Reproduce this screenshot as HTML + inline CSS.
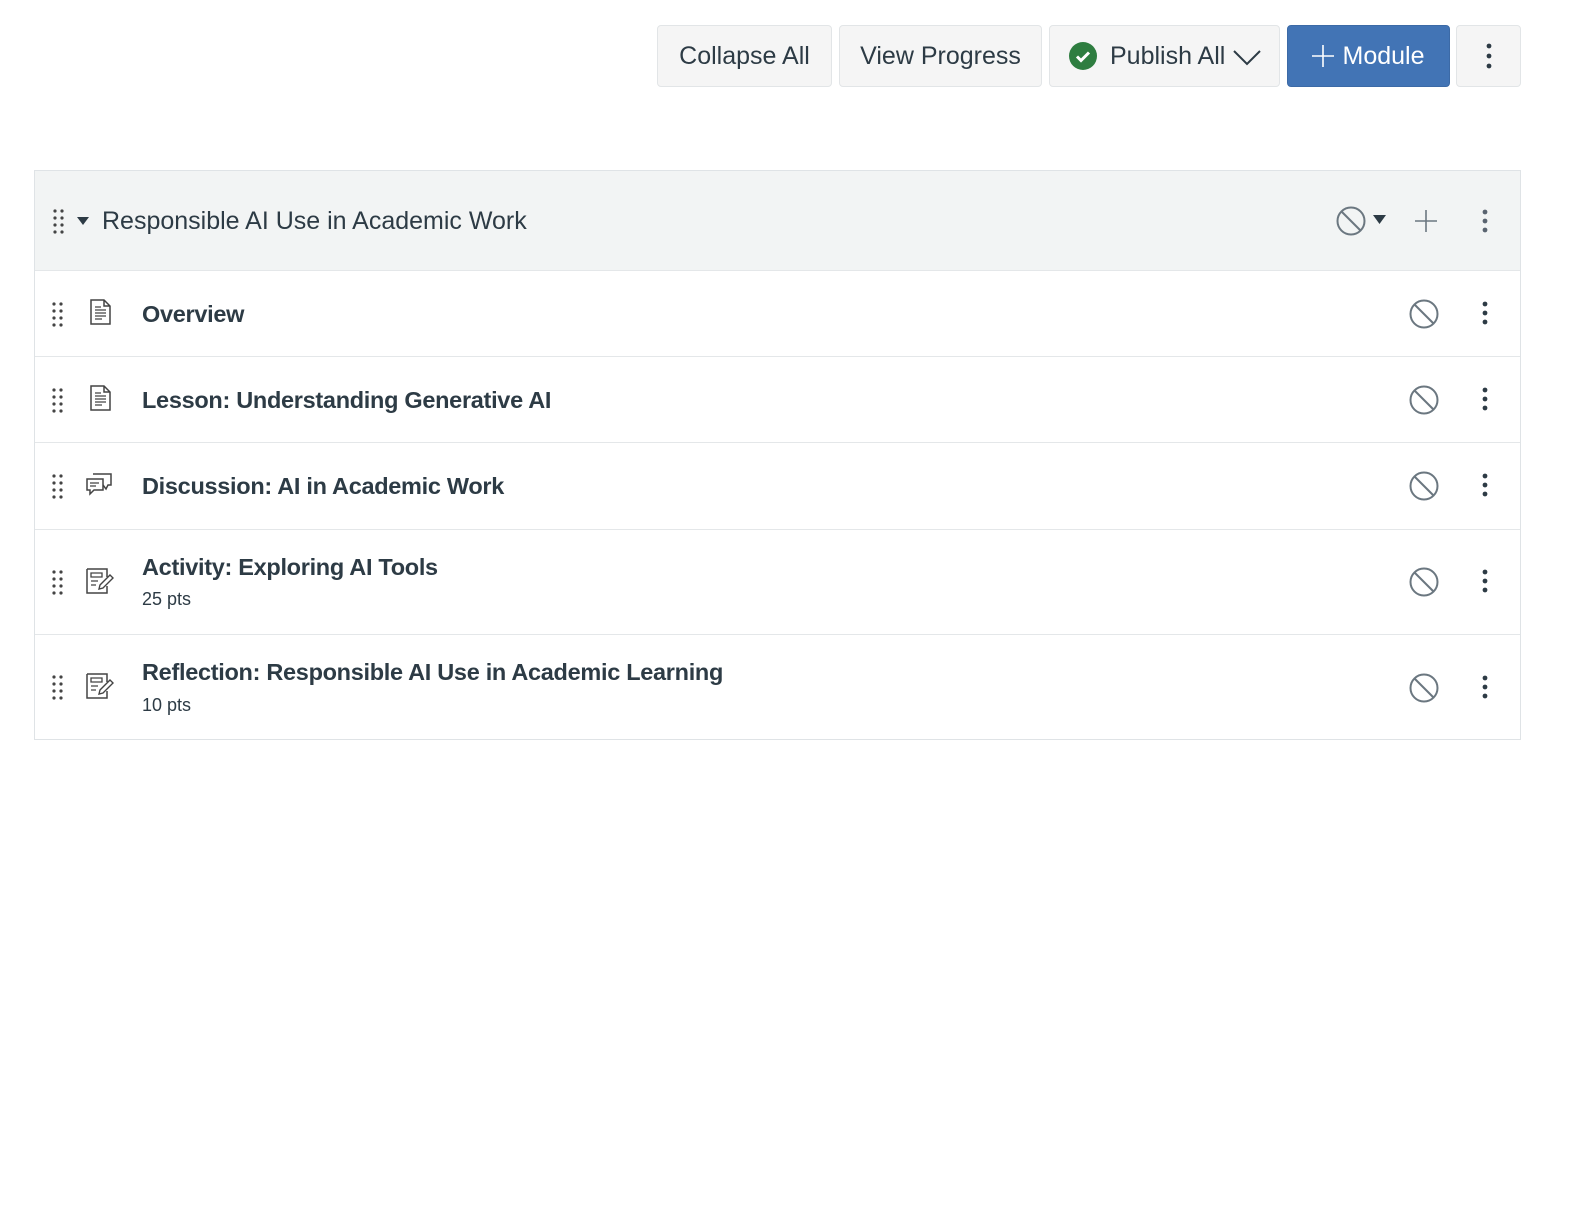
<!DOCTYPE html>
<html><head><meta charset="utf-8"><style>
body{margin:0;width:1586px;height:1213px;background:#fff;font-family:"Liberation Sans",sans-serif;color:#2d3b45;position:relative;overflow:hidden}
.btn{position:absolute;top:25px;height:62px;background:#f5f5f5;border:1px solid #e2e5e7;border-radius:4px;box-sizing:border-box;font-size:25px;line-height:60px;text-align:center;color:#2d3b45}
.mod{position:absolute;left:34px;top:170px;width:1487px;height:570px;border:1px solid #dfe3e6;box-sizing:border-box}
.hdr{position:absolute;left:0;top:0;right:0;height:99px;background:#f2f4f4;border-bottom:1px solid #e4e7e9}
.row{position:absolute;left:0;right:0;border-bottom:1px solid #e4e7e9}
.abs{position:absolute}
.t{position:absolute;left:107px;font-size:23.5px;font-weight:bold;color:#2d3b45;letter-spacing:-0.3px}
.pts{position:absolute;left:107px;font-size:18px;color:#2d3b45}
</style></head><body>
<div class="btn" style="left:657px;width:175px">Collapse All</div>
<div class="btn" style="left:839px;width:203px">View Progress</div>
<div class="btn" style="left:1049px;width:231px;text-align:left;padding-left:60px">Publish All
<svg class="abs" style="left:18px;top:15px" width="30" height="30"><circle cx="15" cy="15" r="14" fill="#2e7d40"/><path d="M9 15.5l4 4 8-8" stroke="#fff" stroke-width="3" fill="none"/></svg>
<svg class="abs" style="left:182px;top:22px" width="30" height="18"><path d="M2 3l13 13 13-13" stroke="#2d3b45" stroke-width="2" fill="none"/></svg></div>
<div class="btn" style="left:1287px;width:163px;background:#4274b5;border-color:#3c6aa6;color:#fff;padding-left:30px">Module
<svg class="abs" style="left:24px;top:19px" width="22" height="22"><path d="M11 0v22M0 11h22" stroke="#fff" stroke-width="1.6"/></svg></div>
<div class="btn" style="left:1456px;width:65px"><svg class="abs" style="left:29px;top:17px" width="6" height="26"><circle cx="3" cy="3" r="2.4" fill="#2d3b45"/><circle cx="3" cy="13" r="2.4" fill="#2d3b45"/><circle cx="3" cy="23" r="2.4" fill="#2d3b45"/></svg></div>

<div class="mod">
<div class="hdr">
<svg class="abs" style="left:17px;top:37px" width="14" height="26"><g fill="#444"><circle cx="3" cy="3" r="1.6"/><circle cx="10" cy="3" r="1.6"/><circle cx="3" cy="10" r="1.6"/><circle cx="10" cy="10" r="1.6"/><circle cx="3" cy="17" r="1.6"/><circle cx="10" cy="17" r="1.6"/><circle cx="3" cy="24" r="1.6"/><circle cx="10" cy="24" r="1.6"/></g></svg>
<svg class="abs" style="left:42px;top:45px" width="12" height="10"><path d="M0 1h12L6 9z" fill="#2d3b45"/></svg>
<div class="abs" style="left:67px;top:36px;font-size:25px;color:#2d3b45">Responsible AI Use in Academic Work</div>
<svg class="abs" style="left:1300px;top:34px" width="32" height="32"><circle cx="16" cy="16" r="13.5" stroke="#6b7780" stroke-width="2" fill="none"/><path d="M6.5 6.5l19 19" stroke="#6b7780" stroke-width="2"/></svg>
<svg class="abs" style="left:1338px;top:44px" width="14" height="10"><path d="M0 0h13L6.5 9z" fill="#2d3b45"/></svg>
<svg class="abs" style="left:1380px;top:39px" width="22" height="22"><path d="M11 0v22M0 11h22" stroke="#6b7780" stroke-width="1.6"/></svg>
<svg class="abs" style="left:1447px;top:38px" width="6" height="24"><g fill="#5a6470"><circle cx="3" cy="3" r="2.4"/><circle cx="3" cy="12" r="2.4"/><circle cx="3" cy="21" r="2.4"/></g></svg>
</div>

<div class="row" style="top:99px;height:86px">
<svg class="abs" style="left:16px;top:31px" width="14" height="26"><g fill="#444"><circle cx="3" cy="3" r="1.6"/><circle cx="10" cy="3" r="1.6"/><circle cx="3" cy="10" r="1.6"/><circle cx="10" cy="10" r="1.6"/><circle cx="3" cy="17" r="1.6"/><circle cx="10" cy="17" r="1.6"/><circle cx="3" cy="24" r="1.6"/><circle cx="10" cy="24" r="1.6"/></g></svg>
<svg class="abs" style="left:54px;top:29px" width="24" height="26"><path d="M2 1h13l6 6v18H2z M15 1v6h6" stroke="#444" stroke-width="1.5" fill="none"/><path d="M6 11h11M6 14h11M6 17h11M6 20h7M6 8h6" stroke="#444" stroke-width="1.3"/></svg>
<div class="t" style="top:31px">Overview</div>
<svg class="abs" style="left:1373px;top:28px" width="32" height="32"><circle cx="16" cy="16" r="13.5" stroke="#6b7780" stroke-width="2" fill="none"/><path d="M6.5 6.5l19 19" stroke="#6b7780" stroke-width="2"/></svg>
<svg class="abs" style="left:1447px;top:31px" width="6" height="24"><g fill="#2d3b45"><circle cx="3" cy="3" r="2.4"/><circle cx="3" cy="12" r="2.4"/><circle cx="3" cy="21" r="2.4"/></g></svg>
</div>
<div class="row" style="top:185px;height:86px">
<svg class="abs" style="left:16px;top:31px" width="14" height="26"><g fill="#444"><circle cx="3" cy="3" r="1.6"/><circle cx="10" cy="3" r="1.6"/><circle cx="3" cy="10" r="1.6"/><circle cx="10" cy="10" r="1.6"/><circle cx="3" cy="17" r="1.6"/><circle cx="10" cy="17" r="1.6"/><circle cx="3" cy="24" r="1.6"/><circle cx="10" cy="24" r="1.6"/></g></svg>
<svg class="abs" style="left:54px;top:29px" width="24" height="26"><path d="M2 1h13l6 6v18H2z M15 1v6h6" stroke="#444" stroke-width="1.5" fill="none"/><path d="M6 11h11M6 14h11M6 17h11M6 20h7M6 8h6" stroke="#444" stroke-width="1.3"/></svg>
<div class="t" style="top:31px">Lesson: Understanding Generative AI</div>
<svg class="abs" style="left:1373px;top:28px" width="32" height="32"><circle cx="16" cy="16" r="13.5" stroke="#6b7780" stroke-width="2" fill="none"/><path d="M6.5 6.5l19 19" stroke="#6b7780" stroke-width="2"/></svg>
<svg class="abs" style="left:1447px;top:31px" width="6" height="24"><g fill="#2d3b45"><circle cx="3" cy="3" r="2.4"/><circle cx="3" cy="12" r="2.4"/><circle cx="3" cy="21" r="2.4"/></g></svg>
</div>
<div class="row" style="top:271px;height:87px">
<svg class="abs" style="left:16px;top:31px" width="14" height="26"><g fill="#444"><circle cx="3" cy="3" r="1.6"/><circle cx="10" cy="3" r="1.6"/><circle cx="3" cy="10" r="1.6"/><circle cx="10" cy="10" r="1.6"/><circle cx="3" cy="17" r="1.6"/><circle cx="10" cy="17" r="1.6"/><circle cx="3" cy="24" r="1.6"/><circle cx="10" cy="24" r="1.6"/></g></svg>
<svg class="abs" style="left:50px;top:30px" width="30" height="26"><path d="M2 7h16v11H9l-4 4v-4H2z" stroke="#444" stroke-width="1.5" fill="none"/><path d="M8 2h18v11h-3l-2 4-3-4" stroke="#444" stroke-width="1.5" fill="none"/><path d="M5 11h9M5 14h6" stroke="#444" stroke-width="1.3"/></svg>
<div class="t" style="top:31px">Discussion: AI in Academic Work</div>
<svg class="abs" style="left:1373px;top:28px" width="32" height="32"><circle cx="16" cy="16" r="13.5" stroke="#6b7780" stroke-width="2" fill="none"/><path d="M6.5 6.5l19 19" stroke="#6b7780" stroke-width="2"/></svg>
<svg class="abs" style="left:1447px;top:31px" width="6" height="24"><g fill="#2d3b45"><circle cx="3" cy="3" r="2.4"/><circle cx="3" cy="12" r="2.4"/><circle cx="3" cy="21" r="2.4"/></g></svg>
</div>
<div class="row" style="top:358px;height:105px">
<svg class="abs" style="left:16px;top:40px" width="14" height="26"><g fill="#444"><circle cx="3" cy="3" r="1.6"/><circle cx="10" cy="3" r="1.6"/><circle cx="3" cy="10" r="1.6"/><circle cx="10" cy="10" r="1.6"/><circle cx="3" cy="17" r="1.6"/><circle cx="10" cy="17" r="1.6"/><circle cx="3" cy="24" r="1.6"/><circle cx="10" cy="24" r="1.6"/></g></svg>
<svg class="abs" style="left:50px;top:38px" width="30" height="28"><path d="M2 2h20v8M22 19v7H2V2" stroke="#444" stroke-width="1.5" fill="none"/><path d="M6 6h11v4H6zM6 14h7M6 18h5" stroke="#444" stroke-width="1.3" fill="none"/><path d="M14 22l1-4 10-10 3 3-10 10z" stroke="#444" stroke-width="1.4" fill="none"/></svg>
<div class="t" style="top:25px">Activity: Exploring AI Tools</div>
<div class="pts" style="top:60px">25 pts</div>
<svg class="abs" style="left:1373px;top:37px" width="32" height="32"><circle cx="16" cy="16" r="13.5" stroke="#6b7780" stroke-width="2" fill="none"/><path d="M6.5 6.5l19 19" stroke="#6b7780" stroke-width="2"/></svg>
<svg class="abs" style="left:1447px;top:40px" width="6" height="24"><g fill="#2d3b45"><circle cx="3" cy="3" r="2.4"/><circle cx="3" cy="12" r="2.4"/><circle cx="3" cy="21" r="2.4"/></g></svg>
</div>
<div class="row" style="top:463px;height:105px;border-bottom:none">
<svg class="abs" style="left:16px;top:40px" width="14" height="26"><g fill="#444"><circle cx="3" cy="3" r="1.6"/><circle cx="10" cy="3" r="1.6"/><circle cx="3" cy="10" r="1.6"/><circle cx="10" cy="10" r="1.6"/><circle cx="3" cy="17" r="1.6"/><circle cx="10" cy="17" r="1.6"/><circle cx="3" cy="24" r="1.6"/><circle cx="10" cy="24" r="1.6"/></g></svg>
<svg class="abs" style="left:50px;top:38px" width="30" height="28"><path d="M2 2h20v8M22 19v7H2V2" stroke="#444" stroke-width="1.5" fill="none"/><path d="M6 6h11v4H6zM6 14h7M6 18h5" stroke="#444" stroke-width="1.3" fill="none"/><path d="M14 22l1-4 10-10 3 3-10 10z" stroke="#444" stroke-width="1.4" fill="none"/></svg>
<div class="t" style="top:25px">Reflection: Responsible AI Use in Academic Learning</div>
<div class="pts" style="top:61px">10 pts</div>
<svg class="abs" style="left:1373px;top:38px" width="32" height="32"><circle cx="16" cy="16" r="13.5" stroke="#6b7780" stroke-width="2" fill="none"/><path d="M6.5 6.5l19 19" stroke="#6b7780" stroke-width="2"/></svg>
<svg class="abs" style="left:1447px;top:41px" width="6" height="24"><g fill="#2d3b45"><circle cx="3" cy="3" r="2.4"/><circle cx="3" cy="12" r="2.4"/><circle cx="3" cy="21" r="2.4"/></g></svg>
</div>
</div>
</body></html>
